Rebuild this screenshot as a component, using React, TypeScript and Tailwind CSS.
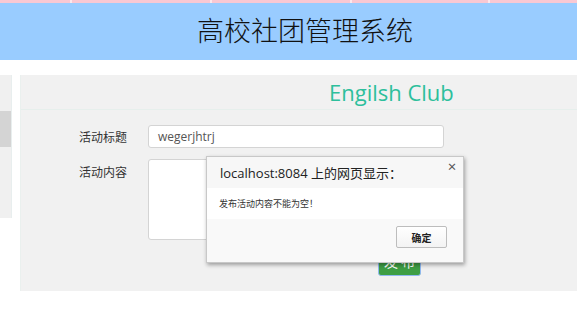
import React from "react";

const cjk = { fontFamily: '"Noto Sans CJK SC", "Noto Sans", sans-serif' };
const latin = { fontFamily: '"Open Sans", "Noto Sans CJK SC", sans-serif' };

export default function App() {
  return (
    <div className="relative w-[577px] h-[323px] overflow-hidden bg-white" style={cjk}>
      {/* pink strip */}
      <div className="flex h-[3px] bg-[#fbd3dc]">
        <div className="w-[70px] bg-[#f9c8d3]" />
        <div className="w-[2px] bg-[#fde7ec]" />
        <div className="w-[138px] bg-[#f9c8d3]" />
        <div className="w-[2px] bg-[#fde7ec]" />
        <div className="w-[138px] bg-[#f9c8d3]" />
        <div className="w-[2px] bg-[#fde7ec]" />
        <div className="w-[136px] bg-[#f9c8d3]" />
        <div className="w-[2px] bg-[#fde7ec]" />
        <div className="flex-1 bg-[#f9c8d3]" />
      </div>
      {/* header */}
      <div className="h-[57px] bg-[#99ccff] flex items-center">
        <div className="ml-[197px] mb-[4px] text-[27px] leading-none text-[#111] font-light" style={cjk}>
          高校社团管理系统
        </div>
      </div>
      {/* body */}
      <div className="flex mt-[15px] gap-[8px]">
        <div className="w-[12px] h-[143px] bg-[#f0f0f0] border-r border-[#e8eeee] flex flex-col">
          <div className="h-[36px]" />
          <div className="h-[36px] bg-[#d4d4d4]" />
        </div>
        <div className="flex-1 h-[216px] bg-[#f1f1f1] border-l border-[#eaf0ee]">
          <div className="h-[35px] border-b border-[#e6efec] flex items-center">
            <div className="ml-[308px] text-[22px] text-[#2dbf9c] leading-none" style={latin}>
              Engilsh Club
            </div>
          </div>
          <div className="flex items-center mt-[15px]">
            <div className="w-[107px] text-right text-[12px] text-[#333] pr-[1px]">活动标题</div>
            <div className="ml-[20px] w-[296px] h-[23px] bg-white border border-[#d4d4d4] rounded-[3px] flex items-center pl-[9px] text-[12px] text-[#555]" style={latin}>
              wegerjhtrj
            </div>
          </div>
          <div className="flex items-start mt-[11px]">
            <div className="w-[107px] text-right text-[12px] text-[#333] pr-[1px] pt-[4px]">活动内容</div>
            <div className="ml-[20px] w-[296px] h-[81px] bg-white border border-[#d4d4d4] rounded-[3px]" />
          </div>
          <div className="flex mt-[6px]">
            <div className="ml-[357px] w-[43px] h-[30px] bg-[#3e9e44] border border-[#8fb8f0] rounded-[3px] text-white text-[14px] flex items-center justify-center">
              发 布
            </div>
          </div>
        </div>
      </div>
      {/* dialog */}
      <div className="absolute left-[206px] top-[156px] w-[258px] h-[107px] bg-[#f9f9f9] border border-[#c8c8c8] shadow-[1px_2px_4px_rgba(0,0,0,0.35)] flex flex-col">
        <div className="h-[31px] bg-[#f7f7f7] flex items-center relative">
          <div className="ml-[13px] mt-[3px] text-[13px] text-[#222]" style={latin}>
            localhost:8084 上的网页显示：
          </div>
          <div className="absolute right-[6px] top-[5px] text-[10px] text-[#555] font-bold leading-none">×</div>
        </div>
        <div className="h-[31px] bg-white flex items-center">
          <div className="ml-[12px] text-[9px] text-[#333]">发布活动内容不能为空！</div>
        </div>
        <div className="flex-1 flex items-start justify-end pr-[16px] pt-[7px]">
          <div className="w-[51px] h-[22px] border border-[#bdbdbd] rounded-[2px] bg-gradient-to-b from-white to-[#f3f3f3] flex items-center justify-center text-[10px] font-bold text-[#222]">
            确定
          </div>
        </div>
      </div>
    </div>
  );
}
